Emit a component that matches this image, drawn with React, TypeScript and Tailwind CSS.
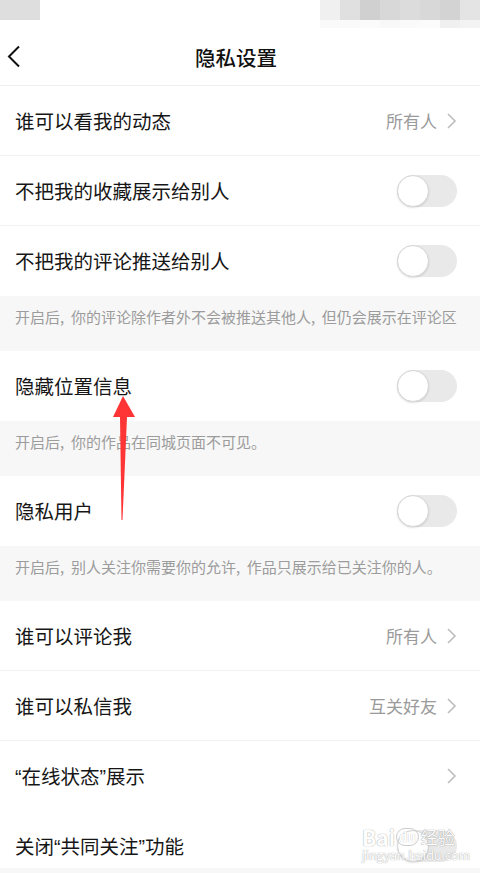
import React from "react";

const font = { fontFamily: '"Noto Sans CJK SC", "Noto Sans", sans-serif' };

function Chevron() {
  return (
    <svg width="12" height="18" viewBox="0 0 12 18" className="ml-[8px]">
      <polyline points="3,2 10,9 3,16" fill="none" stroke="#bdbdbd" strokeWidth="1.6" />
    </svg>
  );
}

function Toggle() {
  return (
    <div className="relative h-[32px] w-[60px] rounded-full bg-[#e9e9e9]">
      <div className="absolute left-0 top-0 h-[32px] w-[32px] rounded-full border border-[#d6d6d6] bg-white shadow-[0_1px_2px_rgba(0,0,0,0.12)]" />
    </div>
  );
}

// narrow latin quotes, like in the screenshot
function Q({ c }: { c: string }) {
  return <span style={{ fontFamily: '"Liberation Sans", sans-serif' }}>{c}</span>;
}

function Row({
  label,
  value,
  toggle,
  chevron,
  divider,
}: {
  label: React.ReactNode;
  value?: string;
  toggle?: boolean;
  chevron?: boolean;
  divider?: boolean;
}) {
  return (
    <div
      className={`flex h-[70px] items-center justify-between bg-white pl-[15px] pr-[23px] ${
        divider ? "border-b border-[#f1f1f1]" : ""
      }`}
    >
      <span className="text-[19.5px] leading-[24px] text-[#161616]">{label}</span>
      {toggle ? (
        <Toggle />
      ) : (
        <div className="flex items-center">
          {value ? <span className="text-[17px] text-[#9a9a9a]">{value}</span> : null}
          {chevron ? <Chevron /> : null}
        </div>
      )}
    </div>
  );
}

function Note({ text }: { text: string }) {
  return (
    <div className="h-[55px] bg-[#f7f7f7] pl-[15px] pt-[11px]">
      <p className="whitespace-pre text-[15px] leading-[20px] text-[#9c9c9c]">{text}</p>
    </div>
  );
}

export default function App() {
  const mosaic = ["#f0f0f0", "#e0e0e0", "#d0d0d0", "#d8d8d8", "#dcdcdc", "#d8d8d8", "#d3d3d3", "#e4e4e4"];
  const mosaic2 = ["#fafafa", "#fafafa", "#fbfbfb", "#f8f8f8", "#fafafa", "#fbfbfb", "#f0f0f0", "#f3f3f3"];

  return (
    <div className="relative h-[873px] w-[480px] overflow-hidden bg-[#f7f7f7]" style={font}>
      {/* blurred status bar */}
      <div className="flex h-[30px] justify-between bg-white">
        <div className="h-[20px] w-[40px] bg-[#dedede]" />
        <div className="flex flex-col">
          <div className="flex">
            {mosaic.map((c, i) => (
              <div key={i} className="h-[20px] w-[20px]" style={{ background: c }} />
            ))}
          </div>
          <div className="flex">
            {mosaic2.map((c, i) => (
              <div key={i} className="h-[8px] w-[20px]" style={{ background: c }} />
            ))}
          </div>
        </div>
      </div>

      {/* header */}
      <div className="relative flex h-[56px] items-center justify-center border-b border-[#eeeeee] bg-white">
        <svg width="14" height="24" viewBox="0 0 14 24" className="absolute left-[7px] top-[15px]">
          <polyline points="12,1.5 2,11.5 12,21.5" fill="none" stroke="#111" strokeWidth="2" />
        </svg>
        <span className="mr-[8px] text-[20.5px] font-medium text-[#111]">隐私设置</span>
      </div>

      <Row label="谁可以看我的动态" value="所有人" chevron divider />
      <Row label="不把我的收藏展示给别人" toggle divider />
      <Row label="不把我的评论推送给别人" toggle />
      <Note text="开启后,  你的评论除作者外不会被推送其他人,  但仍会展示在评论区" />
      <Row label="隐藏位置信息" toggle />
      <Note text="开启后,  你的作品在同城页面不可见。" />
      <Row label="隐私用户" toggle />
      <Note text="开启后,  别人关注你需要你的允许,  作品只展示给已关注你的人。" />
      <Row label="谁可以评论我" value="所有人" chevron divider />
      <Row label="谁可以私信我" value="互关好友" chevron divider />
      <Row
        label={
          <>
            <Q c="“" />在线状态<Q c="”" />展示
          </>
        }
        chevron
      />
      <div className="flex h-[57px] items-center justify-between bg-white pl-[15px] pr-[23px] pt-[13px]">
        <span className="text-[19.5px] leading-[24px] text-[#161616]">
          关闭<Q c="“" />共同关注<Q c="”" />功能
        </span>
        <Toggle />
      </div>

      {/* red arrow annotation */}
      <svg className="absolute left-[108px] top-[393px]" width="32" height="132" viewBox="0 0 32 132">
        <polygon points="15,3 5,24 27,24" fill="#ff3535" />
        <polygon points="12,24 19,24 14.5,127 13.5,127" fill="#ff3535" />
      </svg>

      {/* watermark */}
      <div className="absolute left-[362px] top-[826px] flex flex-col items-start opacity-90">
        <div className="flex items-center gap-[1px]">
          <span className="text-[21px] font-bold leading-[22px] text-white [text-shadow:0_0_1px_#aaa,0_0_1px_#aaa]">
            Bai
          </span>
          <span className="rounded-full border border-[#c8c8c8] px-[2px] text-[13px] font-bold leading-[16px] text-white [text-shadow:0_0_1px_#aaa]">
            du
          </span>
          <span className="ml-[1px] text-[17px] leading-[20px] text-white [text-shadow:0_0_1px_#999,0_0_1px_#999]">
            经验
          </span>
        </div>
        <span className="text-[12.5px] leading-[14px] text-white [text-shadow:0_0_1px_#aaa,0_0_1px_#aaa]">
          jingyan.baidu.com
        </span>
      </div>
    </div>
  );
}
